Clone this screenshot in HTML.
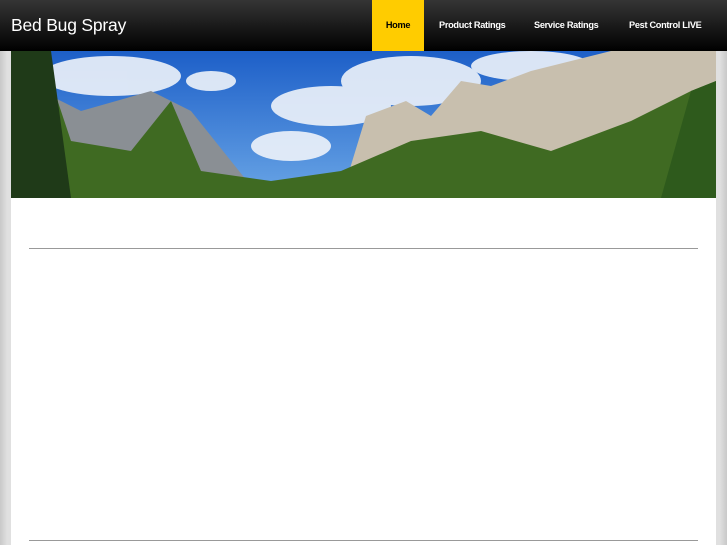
<!DOCTYPE html>
<html><head><style>
*{margin:0;padding:0}
body{width:727px;height:545px;overflow:hidden;background:linear-gradient(90deg,#c8c8c8,#e0e0e0 1%,#e0e0e0 99%,#c8c8c8);font-family:"Liberation Sans",sans-serif;position:relative}
.hdr{position:absolute;left:0;top:0;width:727px;height:51px;background:linear-gradient(#353535,#000);}
.logo{position:absolute;left:11px;top:15px;color:#fff;font-size:17.5px;letter-spacing:-0.2px}
.nav a{position:absolute;top:0;height:51px;line-height:50px;font-size:9.2px;font-weight:bold;color:#fff;text-decoration:none;letter-spacing:-0.3px}
.wrap{position:absolute;left:11px;top:51px;width:705px;height:494px;background:#fff}
.line{position:absolute;left:29px;width:669px;height:1px;background:#999}
</style></head><body>
<div class="hdr"><div class="logo">Bed Bug Spray</div>
<div class="nav">
<a style="left:372px;width:52px;background:#fc0;color:#000;text-align:center">Home</a>
<a style="left:439px">Product Ratings</a>
<a style="left:534px">Service Ratings</a>
<a style="left:629px">Pest Control LIVE</a>
</div></div>
<div class="wrap">
<svg width="705" height="147" viewBox="0 0 705 147" style="display:block">
<defs><linearGradient id="s" x1="0" y1="0" x2="0" y2="1"><stop offset="0" stop-color="#1d5fc8"/><stop offset="1" stop-color="#6aa6e6"/></linearGradient></defs>
<rect width="705" height="147" fill="url(#s)"/>
<g fill="#eef3fa" opacity=".9">
<ellipse cx="100" cy="25" rx="70" ry="20"/><ellipse cx="200" cy="30" rx="25" ry="10"/>
<ellipse cx="320" cy="55" rx="60" ry="20"/><ellipse cx="400" cy="30" rx="70" ry="25"/>
<ellipse cx="280" cy="95" rx="40" ry="15"/><ellipse cx="520" cy="15" rx="60" ry="15"/>
</g>
<path d="M30 40 L70 60 L140 40 L180 60 L240 135 L30 147Z" fill="#8a8f94"/>
<path d="M330 147 L355 65 L395 50 L420 65 L450 30 L480 35 L520 20 L560 10 L600 0 L705 0 L705 147Z" fill="#c8bfae"/>
<path d="M0 147 L0 0 L30 0 L60 90 L120 100 L160 50 L190 120 L260 130 L330 120 L400 90 L470 80 L540 100 L620 70 L680 40 L705 30 L705 147Z" fill="#3f6a22"/>
<path d="M0 147 L0 0 L40 0 L60 147Z" fill="#1f3a18"/>
<path d="M650 147 L680 40 L705 30 L705 147Z" fill="#2e5a1c"/>
</svg>
</div>
<div class="line" style="top:248px"></div>
<div class="line" style="top:540px"></div>
</body></html>
